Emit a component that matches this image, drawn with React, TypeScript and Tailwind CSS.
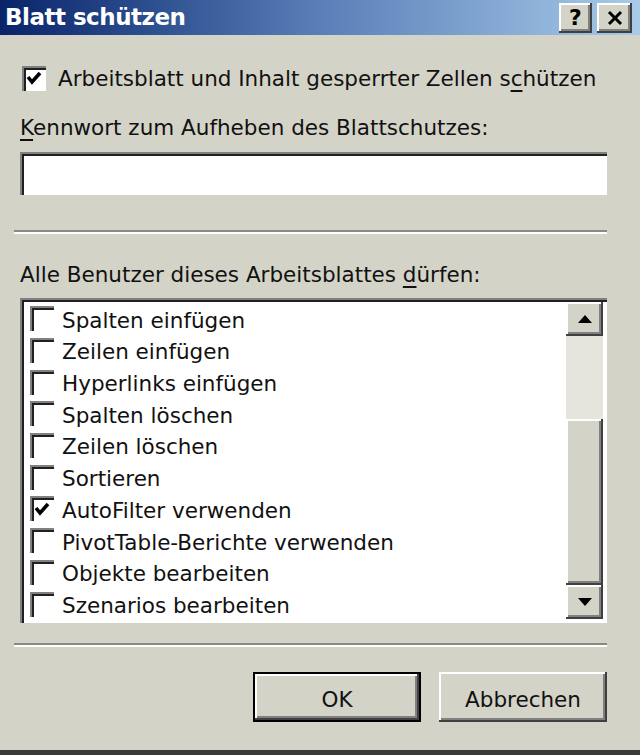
import React from 'react';

const raised =
  'shadow-[inset_-2px_-2px_0_#404040,inset_2px_2px_0_#ffffff,inset_-4px_-4px_0_#808080]';
const sunken =
  'shadow-[inset_2px_2px_0_#808080,inset_4px_4px_0_#202020,inset_-2px_-2px_0_#ffffff]';

const Check: React.FC<{ checked?: boolean }> = ({ checked }) => (
  <div className={`w-[24px] h-[25px] bg-white shrink-0 flex items-center justify-center ${sunken}`}>
    {checked && (
      <svg width="16" height="14" viewBox="0 0 16 14">
        <polyline points="2,6 6,11 14,2" fill="none" stroke="#000" strokeWidth="3.6" />
      </svg>
    )}
  </div>
);

const items: [string, boolean][] = [
  ['Spalten einfügen', false],
  ['Zeilen einfügen', false],
  ['Hyperlinks einfügen', false],
  ['Spalten löschen', false],
  ['Zeilen löschen', false],
  ['Sortieren', false],
  ['AutoFilter verwenden', true],
  ['PivotTable-Berichte verwenden', false],
  ['Objekte bearbeiten', false],
  ['Szenarios bearbeiten', false],
];

const Separator = () => (
  <div className="ml-[14px] w-[593px] h-[4px] border-t-2 border-[#8a8a82] border-b-2 border-b-white" />
);

export default function App() {
  return (
    <div className="w-[640px] h-[755px] bg-[#d4d3c7] flex flex-col font-['DejaVu_Sans',sans-serif] text-[21.5px] text-[#111] border-b-[5px] border-[#3a3a36]">
      {/* title bar */}
      <div className="h-[35px] shrink-0 bg-gradient-to-r from-[#0a246a] via-[#5a7fb8] to-[#a8cbe8] flex items-center pl-[5px] pr-[8px]">
        <span className="text-white font-bold text-[23px] tracking-[-0.5px]">Blatt schützen</span>
        <div className="ml-auto flex gap-[5px]">
          <div className={`w-[33px] h-[30px] bg-[#d4d3c7] flex items-center justify-center font-bold text-[22px] text-black ${raised}`}>?</div>
          <div className={`w-[35px] h-[30px] bg-[#d4d3c7] flex items-center justify-center ${raised}`}>
            <svg width="18" height="16" viewBox="0 0 18 16">
              <path d="M3 2 L15 14 M15 2 L3 14" stroke="#000" strokeWidth="3" />
            </svg>
          </div>
        </div>
      </div>

      {/* protect checkbox */}
      <div className="mt-[30px] ml-[22px] flex items-center h-[26px]">
        <Check checked />
        <span className="ml-[12px] pt-[3px] whitespace-nowrap">
          Arbeitsblatt und Inhalt gesperrter Zellen s<u className="underline-offset-4">c</u>hützen
        </span>
      </div>

      <div className="mt-[23px] ml-[20px] h-[26px] flex items-center">
        <span className="pt-[3px]">
          <u className="underline-offset-4">K</u>ennwort zum Aufheben des Blattschutzes:
        </span>
      </div>

      <div className={`mt-[12px] ml-[20px] w-[587px] h-[43px] bg-white ${sunken}`} />

      <div className="mt-[35px]">
        <Separator />
      </div>

      <div className="mt-[26px] ml-[20px] h-[26px] flex items-center">
        <span className="pt-[4px]">
          Alle Benutzer dieses Arbeitsblattes <u className="underline-offset-4">d</u>ürfen:
        </span>
      </div>

      {/* list */}
      <div className={`mt-[12px] ml-[20px] w-[587px] h-[325px] bg-white flex p-[4px] ${sunken}`}>
        <div className="flex-1 flex flex-col pl-[6px] pt-[1px] overflow-hidden">
          {items.map(([label, checked]) => (
            <div key={label} className="h-[31.7px] flex items-center">
              <Check checked={checked} />
              <span className="ml-[8px] pt-[4px] whitespace-nowrap">{label}</span>
            </div>
          ))}
        </div>
        <div className="w-[37px] flex flex-col shrink-0">
          <div className={`h-[34px] bg-[#d4d3c7] flex items-center justify-center ${raised}`}>
            <svg width="14" height="8" viewBox="0 0 14 8">
              <polygon points="7,0 14,8 0,8" fill="#000" />
            </svg>
          </div>
          <div className="h-[83px] bg-[#e6e5dd]" />
          <div className={`flex-1 bg-[#d4d3c7] ${raised}`} />
          <div className={`h-[34px] bg-[#d4d3c7] flex items-center justify-center ${raised}`}>
            <svg width="14" height="8" viewBox="0 0 14 8">
              <polygon points="0,0 14,0 7,8" fill="#000" />
            </svg>
          </div>
        </div>
      </div>

      <div className="mt-[20px]">
        <Separator />
      </div>

      {/* buttons */}
      <div className="mt-[25px] ml-[253px] flex gap-[18px]">
        <div className="w-[168px] h-[50px] border-2 border-black">
          <div className={`w-full h-full bg-[#d4d3c7] flex items-center justify-center pt-[6px] ${raised}`}>OK</div>
        </div>
        <div className={`w-[168px] h-[50px] bg-[#d4d3c7] flex items-center justify-center pt-[6px] ${raised}`}>Abbrechen</div>
      </div>
    </div>
  );
}
